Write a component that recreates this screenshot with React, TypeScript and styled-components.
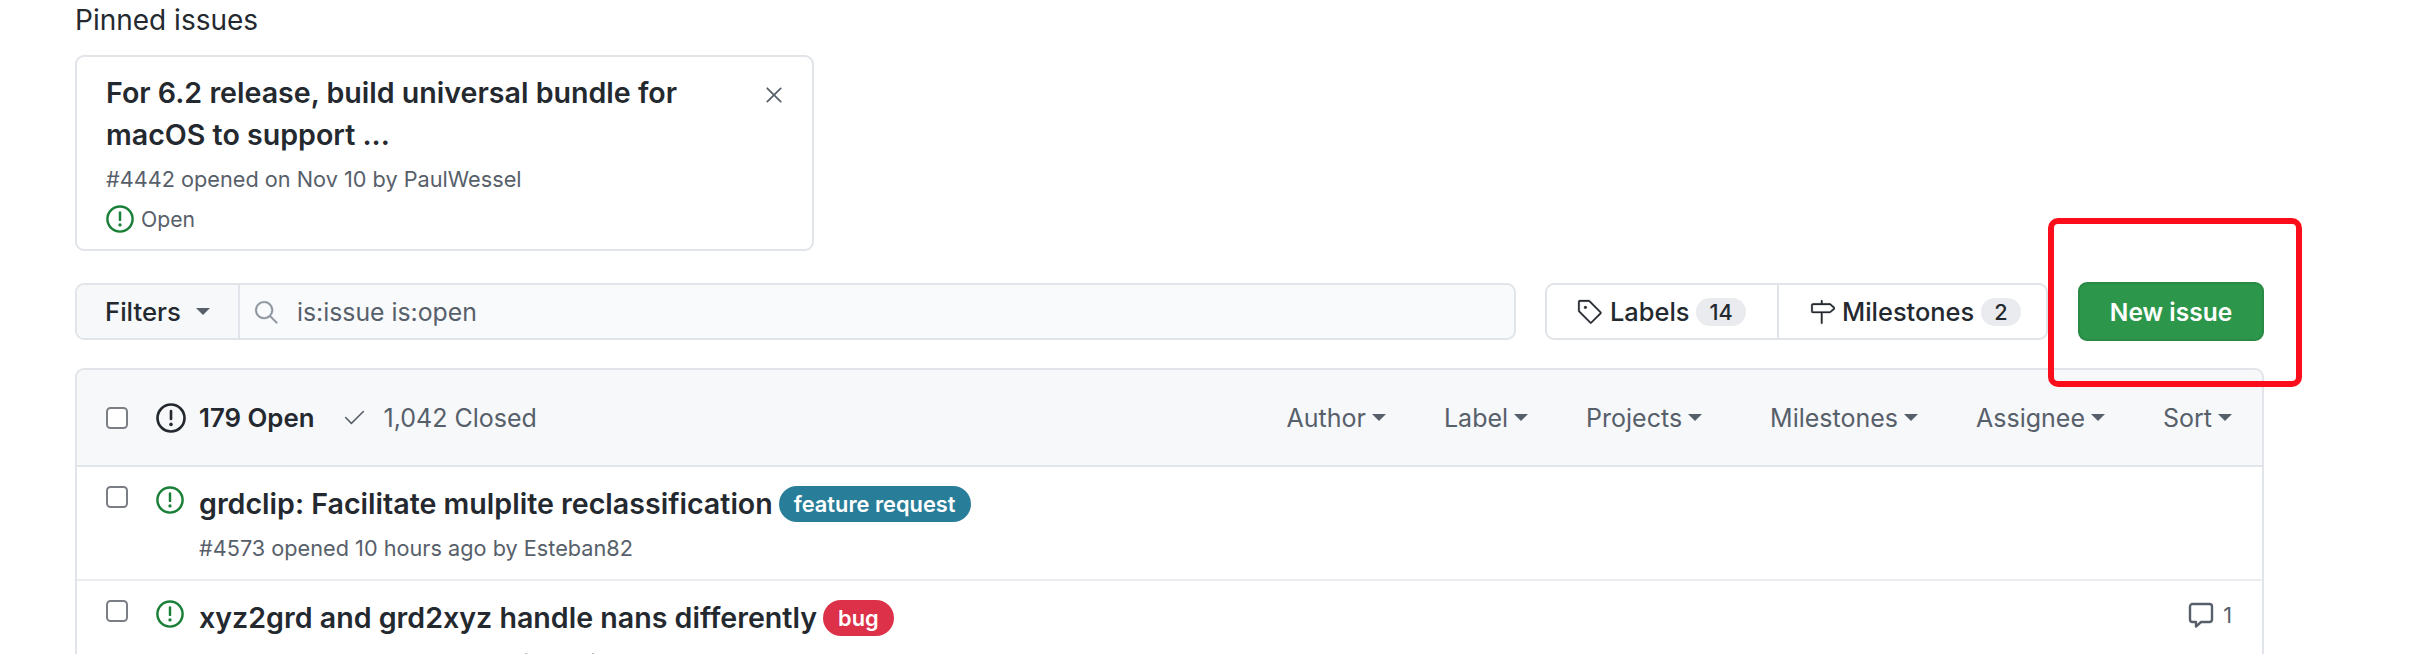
import styled, { createGlobalStyle } from 'styled-components';
import { GoCheck, GoMilestone, GoSearch, GoTag, GoX } from 'react-icons/go';

const GlobalStyle = createGlobalStyle`
  html, body {
    margin: 0;
    height: 654px;
    overflow: hidden;
    background: #ffffff;
  }
  body {
    font-family: Inter, "Liberation Sans", sans-serif;
    color: #24292f;
  }
`;

const Page = styled.div`
  position: relative;
  width: 2189px;
  padding: 4px 0 0 75px;
`;

const PinnedTitle = styled.div`
  font-size: 28px;
  line-height: 32px;
  height: 51px;
`;

const PinnedCard = styled.div`
  width: 739px;
  height: 196px;
  box-sizing: border-box;
  border: 2px solid #e1e4e8;
  border-radius: 9px;
  padding: 15px 29px 0;
  position: relative;
`;

const PinnedHeading = styled.div`
  width: 620px;
  font-size: 28.6px;
  font-weight: 600;
  line-height: 42px;
`;

const CloseButton = styled.span`
  position: absolute;
  top: 24px;
  right: 24px;
  color: #57606a;
  display: flex;
`;

const Meta = styled.div`
  font-size: 21.7px;
  color: #57606a;
  line-height: 26px;
`;

const PinnedMeta = styled(Meta)`
  margin-top: 10px;
`;

const StateRow = styled.div`
  display: flex;
  align-items: center;
  gap: 7px;
  margin-top: 13px;
  font-size: 21.2px;
  color: #57606a;
  line-height: 28px;
`;

const GreenIcon = styled.span`
  display: flex;
  color: #1a7f37;
`;

const Toolbar = styled.div`
  display: flex;
  align-items: stretch;
  height: 57px;
  margin-top: 32px;
`;

const FilterGroup = styled.div`
  display: flex;
  width: 1441px;
  box-sizing: border-box;
  border: 2px solid #e1e4e8;
  border-radius: 9px;
  background: #f9fafb;
`;

const FilterButton = styled.div`
  display: flex;
  align-items: center;
  gap: 15px;
  width: 163px;
  box-sizing: border-box;
  padding-left: 28px;
  border-right: 2px solid #e1e4e8;
  background: #f6f8fa;
  border-radius: 7px 0 0 7px;
  font-size: 25.7px;
  font-weight: 500;
`;

const Caret = styled.span<{ $size?: number; $color?: string }>`
  display: inline-block;
  width: 0;
  height: 0;
  border-style: solid;
  border-width: ${p => p.$size ?? 7}px ${p => p.$size ?? 7}px 0;
  border-color: ${p => p.$color ?? '#57606a'} transparent transparent;
`;

const SearchBox = styled.div`
  display: flex;
  align-items: center;
  gap: 18px;
  padding-left: 13px;
  font-size: 24.8px;
  color: #57606a;
`;

const SearchGlyph = styled.span`
  display: flex;
  color: #8c959f;
  svg {
    stroke: currentColor;
    stroke-width: 0.35px;
  }
`;

const NavGroup = styled.div`
  display: flex;
  width: 503px;
  margin-left: 29px;
  box-sizing: border-box;
  border: 2px solid #e1e4e8;
  border-radius: 9px;
`;

const NavItem = styled.div<{ $width: number; $divider?: boolean }>`
  display: flex;
  align-items: center;
  gap: 7px;
  width: ${p => p.$width}px;
  box-sizing: border-box;
  padding-left: 30px;
  border-right: ${p => (p.$divider ? '2px solid #e1e4e8' : 'none')};
  font-size: 25.4px;
  font-weight: 500;
  svg {
    flex: none;
    stroke: currentColor;
    stroke-width: 0.25px;
  }
`;

const Count = styled.span`
  padding: 0 13px;
  border-radius: 15px;
  background: #e9ebee;
  font-size: 21.7px;
  font-weight: 500;
  line-height: 28px;
`;

const NewIssueButton = styled.div`
  display: flex;
  align-items: center;
  justify-content: center;
  width: 186px;
  margin: -1px 0 -1px 30px;
  box-sizing: border-box;
  border: 2px solid #288a45;
  border-radius: 9px;
  background: #2c974b;
  color: #ffffff;
  font-size: 24.5px;
  font-weight: 600;
`;

const IssueBox = styled.div`
  margin-top: 28px;
  border: 2px solid #e1e4e8;
  border-bottom: none;
  border-radius: 9px 9px 0 0;
`;

const BoxHeader = styled.div`
  display: flex;
  align-items: center;
  height: 95px;
  padding: 0 30px 0 29px;
  background: #f6f8fa;
  border-radius: 7px 7px 0 0;
  border-bottom: 2px solid #e1e4e8;
`;

const Checkbox = styled.span`
  display: block;
  flex: none;
  width: 22px;
  height: 22px;
  box-sizing: border-box;
  border: 2.5px solid #7b7f85;
  border-radius: 4.5px;
  background: #ffffff;
`;

const OpenTab = styled.div`
  display: flex;
  align-items: center;
  gap: 13px;
  margin-left: 28px;
  font-size: 25.8px;
  font-weight: 600;
`;

const ClosedTab = styled.div`
  display: flex;
  align-items: center;
  gap: 16px;
  margin-left: 28px;
  font-size: 25px;
  color: #57606a;
`;

const Filters = styled.div`
  display: flex;
  margin-left: auto;
  gap: 58px;
`;

const FilterMenu = styled.div<{ $extra?: number }>`
  display: flex;
  align-items: center;
  gap: 6px;
  margin-right: ${p => p.$extra ?? 0}px;
  font-size: 25px;
  color: #57606a;
`;

const IssueRow = styled.div`
  display: flex;
  height: 112px;
  padding: 0 30px 0 29px;
  border-bottom: 2px solid #eaecef;
`;

const RowCheck = styled.div`
  padding-top: 19px;
`;

const RowIcon = styled.span`
  display: flex;
  align-self: flex-start;
  margin: 19px 15px 0 28px;
  color: #1a7f37;
`;

const RowBody = styled.div`
  flex: 1;
  padding-top: 18px;
`;

const TitleLine = styled.div`
  display: flex;
  align-items: center;
  gap: 6px;
`;

const IssueTitle = styled.span`
  font-size: 28.6px;
  font-weight: 600;
  line-height: 38px;
`;

const Label = styled.span<{ $bg: string }>`
  padding: 0 15px;
  border-radius: 18px;
  background: ${p => p.$bg};
  color: #ffffff;
  font-size: 21.8px;
  font-weight: 600;
  line-height: 36px;
`;

const RowMeta = styled(Meta)`
  margin-top: 12px;
`;

const Comments = styled.div`
  display: flex;
  align-items: flex-start;
  gap: 9px;
  padding-top: 21px;
  font-size: 21.7px;
  line-height: 26px;
  color: #57606a;
`;

const Annotation = styled.div`
  position: absolute;
  left: 2048px;
  top: 218px;
  width: 254px;
  height: 169px;
  box-sizing: border-box;
  border: 6px solid #fc0d1b;
  border-radius: 10px;
`;

const menus = [
  { name: 'Author' },
  { name: 'Label' },
  { name: 'Projects', extra: 10 },
  { name: 'Milestones' },
  { name: 'Assignee' },
  { name: 'Sort' },
];

function IssueIcon({ size }: { size: number }) {
  return (
    <svg width={size} height={size} viewBox="0 0 16 16" fill="none">
      <circle cx="8" cy="8" r="7.2" stroke="currentColor" strokeWidth="1.4" />
      <rect x="7.3" y="3.6" width="1.4" height="5.6" rx="0.7" fill="currentColor" />
      <circle cx="8" cy="11.4" r="0.95" fill="currentColor" />
    </svg>
  );
}

function CommentIcon() {
  return (
    <svg width="26" height="26" viewBox="0 0 26 26" fill="none">
      <path
        d="M4.5 2h17A2.5 2.5 0 0 1 24 4.5v13a2.5 2.5 0 0 1-2.5 2.5H13l-5 4.6V20H4.500A2.500 2.500 0 0 1 2 17.500v-13A2.500 2.500 0 0 1 4.500 2z"
        stroke="currentColor"
        strokeWidth="2.4"
        strokeLinejoin="round"
      />
    </svg>
  );
}

export default function App() {
  return (
    <Page>
      <GlobalStyle />
      <PinnedTitle>Pinned issues</PinnedTitle>
      <PinnedCard>
        <PinnedHeading>For 6.2 release, build universal bundle for macOS to support ...</PinnedHeading>
        <CloseButton><GoX size={28} /></CloseButton>
        <PinnedMeta>#4442 opened on Nov 10 by PaulWessel</PinnedMeta>
        <StateRow>
          <GreenIcon><IssueIcon size={28} /></GreenIcon>
          Open
        </StateRow>
      </PinnedCard>

      <Toolbar>
        <FilterGroup>
          <FilterButton>
            Filters
            <Caret />
          </FilterButton>
          <SearchBox>
            <SearchGlyph><GoSearch size={26} /></SearchGlyph>
            is:issue is:open
          </SearchBox>
        </FilterGroup>
        <NavGroup>
          <NavItem $width={232} $divider>
            <GoTag size={26} />
            Labels
            <Count>14</Count>
          </NavItem>
          <NavItem $width={267}>
            <GoMilestone size={26} />
            Milestones
            <Count>2</Count>
          </NavItem>
        </NavGroup>
        <NewIssueButton>New issue</NewIssueButton>
      </Toolbar>

      <IssueBox>
        <BoxHeader>
          <Checkbox />
          <OpenTab>
            <IssueIcon size={30} />
            179 Open
          </OpenTab>
          <ClosedTab>
            <GoCheck size={25} />
            1,042 Closed
          </ClosedTab>
          <Filters>
            {menus.map(menu => (
              <FilterMenu key={menu.name} $extra={menu.extra}>
                {menu.name}
                <Caret $size={7} />
              </FilterMenu>
            ))}
          </Filters>
        </BoxHeader>
        <IssueRow>
          <RowCheck><Checkbox /></RowCheck>
          <RowIcon><IssueIcon size={28} /></RowIcon>
          <RowBody>
            <TitleLine>
              <IssueTitle>grdclip: Facilitate mulplite reclassification</IssueTitle>
              <Label $bg="#287d99">feature request</Label>
            </TitleLine>
            <RowMeta>#4573 opened 10 hours ago by Esteban82</RowMeta>
          </RowBody>
        </IssueRow>
        <IssueRow>
          <RowCheck><Checkbox /></RowCheck>
          <RowIcon><IssueIcon size={28} /></RowIcon>
          <RowBody>
            <TitleLine>
              <IssueTitle>xyz2grd and grd2xyz handle nans differently</IssueTitle>
              <Label $bg="#dc3149">bug</Label>
            </TitleLine>
            <RowMeta>#4572 opened 12 hours ago by joa-quim</RowMeta>
          </RowBody>
          <Comments>
            <CommentIcon />
            1
          </Comments>
        </IssueRow>
      </IssueBox>
      <Annotation />
    </Page>
  );
}
